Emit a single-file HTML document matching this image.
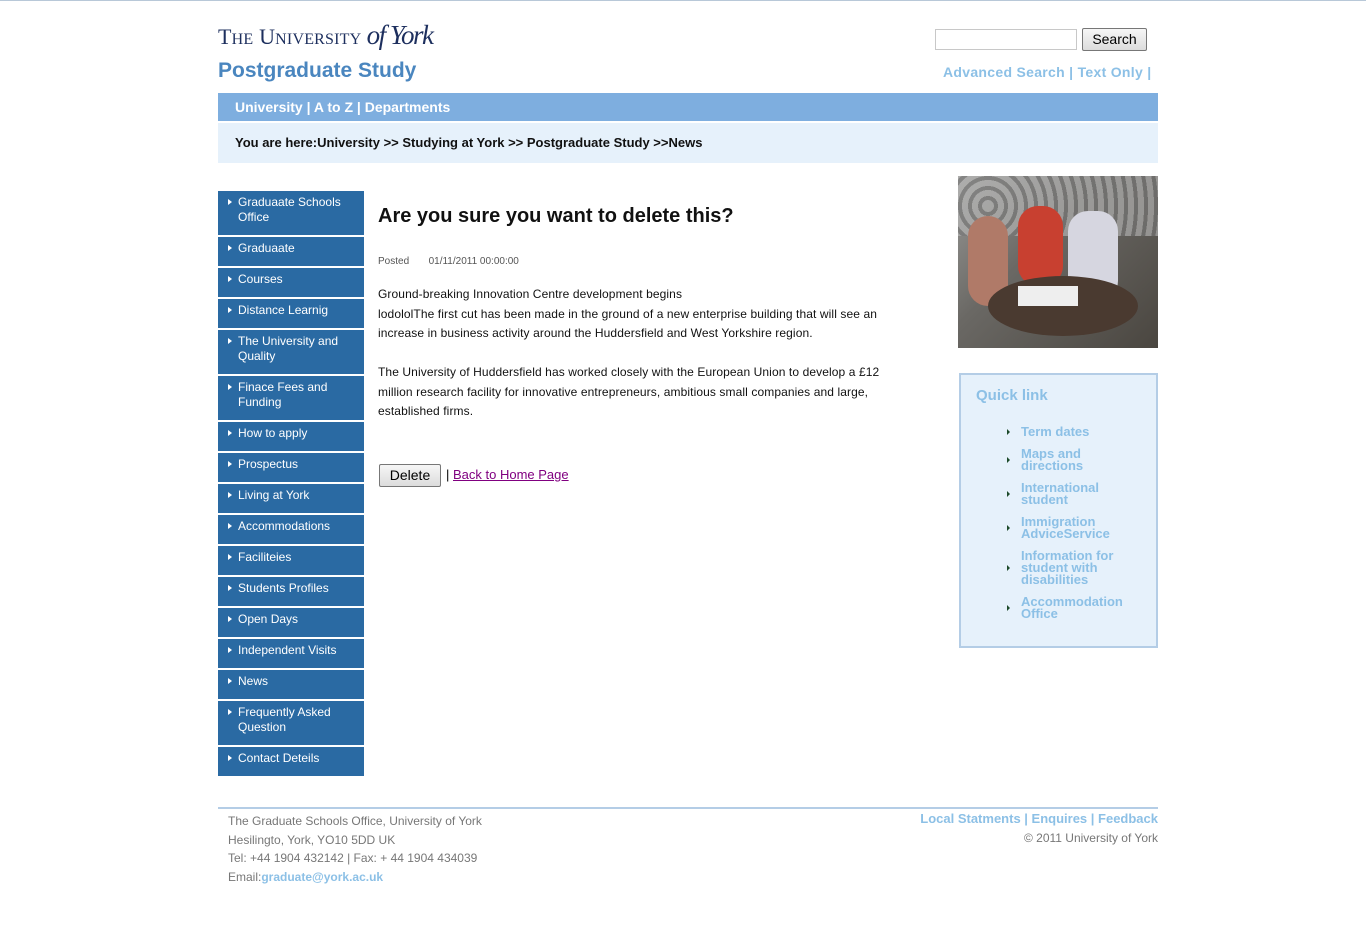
<!DOCTYPE html>
<html><head><meta charset="utf-8"><style>
*{margin:0;padding:0;box-sizing:border-box}
body{width:1366px;height:934px;background:#fff;font-family:"Liberation Sans",Arial,sans-serif;position:relative;overflow:hidden}
.a{position:absolute}
.nav div{position:absolute;left:218px;width:146px;background:#2a6aa3;color:#fff;font-size:12px;line-height:15px;padding:4px 6px 0 20px}
.nav div:before{content:"";position:absolute;left:10px;top:8px;border-left:4px solid #fff;border-top:3px solid transparent;border-bottom:3px solid transparent}
.ql div{position:absolute;left:1021px;color:#8cc0e6;font-weight:bold;font-size:13px;line-height:12px;width:120px}
.ql div:before{content:"";position:absolute;left:-14px;border-left:3px solid #1c4a2a;border-top:3px solid transparent;border-bottom:3px solid transparent}
</style></head><body>
<div class="a" style="left:0;top:0;width:1366px;height:1px;background:#b8c8d8"></div>
<div class="a" style="left:218px;top:20px;font-family:'Liberation Serif',serif;color:#1d2f5e;font-size:22px;letter-spacing:0.2px;white-space:nowrap">T<span style="font-size:16px">HE</span> U<span style="font-size:16px">NIVERSITY</span><i style="font-size:27px;letter-spacing:-1.5px"> of York</i></div>
<div class="a" style="left:218px;top:59px;color:#4a86bf;font-size:21px;font-weight:bold">Postgraduate Study</div>
<div class="a" style="left:935px;top:29px;width:142px;height:21px;border:1px solid #c8c8c8"></div>
<div class="a" style="left:1082px;top:28px;width:65px;height:23px;border:1px solid #777;border-radius:2px;background:linear-gradient(#f6f6f6,#dcdcdc);font-size:14px;text-align:center;line-height:21px">Search</div>
<div class="a" style="left:943px;top:64px;color:#8cc0e6;font-size:14px;font-weight:bold;letter-spacing:0.3px">Advanced Search | Text Only |</div>
<div class="a" style="left:218px;top:93px;width:940px;height:28px;background:#7eaedf;color:#fff;font-weight:bold;font-size:14px;line-height:28px;padding-left:17px">University | A to Z | Departments</div>
<div class="a" style="left:218px;top:123px;width:940px;height:40px;background:#e6f1fb;font-size:13px;line-height:40px;padding-left:17px;font-weight:bold;color:#111">You are here:University &gt;&gt; Studying at York &gt;&gt; Postgraduate Study &gt;&gt;News</div>
<div class="nav">
<div style="top:191px;height:44px">Graduaate Schools Office</div>
<div style="top:237px;height:29px">Graduaate</div>
<div style="top:268px;height:29px">Courses</div>
<div style="top:299px;height:29px">Distance Learnig</div>
<div style="top:330px;height:44px">The University and Quality</div>
<div style="top:376px;height:44px">Finace Fees and Funding</div>
<div style="top:422px;height:29px">How to apply</div>
<div style="top:453px;height:29px">Prospectus</div>
<div style="top:484px;height:29px">Living at York</div>
<div style="top:515px;height:29px">Accommodations</div>
<div style="top:546px;height:29px">Faciliteies</div>
<div style="top:577px;height:29px">Students Profiles</div>
<div style="top:608px;height:29px">Open Days</div>
<div style="top:639px;height:29px">Independent Visits</div>
<div style="top:670px;height:29px">News</div>
<div style="top:701px;height:44px">Frequently Asked Question</div>
<div style="top:747px;height:29px">Contact Deteils</div>
</div>
<div class="a" style="left:378px;top:205px;font-size:20px;font-weight:bold;color:#111">Are you sure you want to delete this?</div>
<div class="a" style="left:378px;top:256px;font-size:10px;color:#555">Posted&nbsp;&nbsp;&nbsp;&nbsp;&nbsp;&nbsp;&nbsp;01/11/2011 00:00:00</div>
<div class="a" style="left:378px;top:285px;width:535px;font-size:12px;line-height:19.5px;color:#111;letter-spacing:0.1px">Ground-breaking Innovation Centre development begins<br>lodololThe first cut has been made in the ground of a new enterprise building that will see an increase in business activity around the Huddersfield and West Yorkshire region.<br><br>The University of Huddersfield has worked closely with the European Union to develop a £12 million research facility for innovative entrepreneurs, ambitious small companies and large, established firms.</div>
<div class="a" style="left:379px;top:464px;width:62px;height:23px;border:1px solid #777;border-radius:2px;background:linear-gradient(#f6f6f6,#dcdcdc);font-size:14px;text-align:center;line-height:21px">Delete</div>
<div class="a" style="left:446px;top:467px;font-size:13px">| <span style="color:#800080;text-decoration:underline">Back to Home Page</span></div>
<div class="a" style="left:958px;top:176px;width:200px;height:172px;background:linear-gradient(135deg,#9a9a98,#6a6864 40%,#4a4640);overflow:hidden">
<div class="a" style="left:0;top:0;width:200px;height:60px;background:repeating-radial-gradient(circle at 30px 30px,#bbb 0 6px,#777 6px 10px);opacity:.6"></div>
<div class="a" style="left:10px;top:40px;width:40px;height:90px;border-radius:20px;background:#b07a68"></div>
<div class="a" style="left:60px;top:30px;width:45px;height:80px;border-radius:20px;background:#c84030"></div>
<div class="a" style="left:110px;top:35px;width:50px;height:90px;border-radius:20px;background:#d6d6e0"></div>
<div class="a" style="left:30px;top:100px;width:150px;height:60px;border-radius:50%;background:#4a3a30"></div>
<div class="a" style="left:60px;top:110px;width:60px;height:20px;background:#eee"></div>
</div>
<div class="a" style="left:959px;top:373px;width:199px;height:275px;background:#e6f1fb;border:2px solid #b4cde6"></div>
<div class="a" style="left:976px;top:387px;color:#8cc0e6;font-weight:bold;font-size:15px">Quick link</div>
<div class="ql">
<div style="top:426px">Term dates</div>
<div style="top:448px">Maps and directions</div>
<div style="top:482px">International student</div>
<div style="top:516px">Immigration AdviceService</div>
<div style="top:550px">Information for student with disabilities</div>
<div style="top:596px">Accommodation Office</div>
</div>
<style>.ql div:nth-child(1):before{top:3px}.ql div:nth-child(2):before,.ql div:nth-child(3):before,.ql div:nth-child(4):before,.ql div:nth-child(6):before{top:9px}.ql div:nth-child(5):before{top:15px}</style>
<div class="a" style="left:218px;top:807px;width:940px;height:2px;background:#b4cde6"></div>
<div class="a" style="left:228px;top:812px;font-size:12px;line-height:18.5px;color:#777">The Graduate Schools Office, University of York<br>Hesilingto, York, YO10 5DD UK<br>Tel: +44 1904 432142 | Fax: + 44 1904 434039<br>Email:<b style="color:#8cc0e6">graduate@york.ac.uk</b></div>
<div class="a" style="right:208px;top:811px;font-size:13px;font-weight:bold;color:#8cc0e6;text-align:right">Local Statments | Enquires | Feedback</div>
<div class="a" style="right:208px;top:831px;font-size:12px;color:#777;text-align:right">© 2011 University of York</div>
</body></html>
